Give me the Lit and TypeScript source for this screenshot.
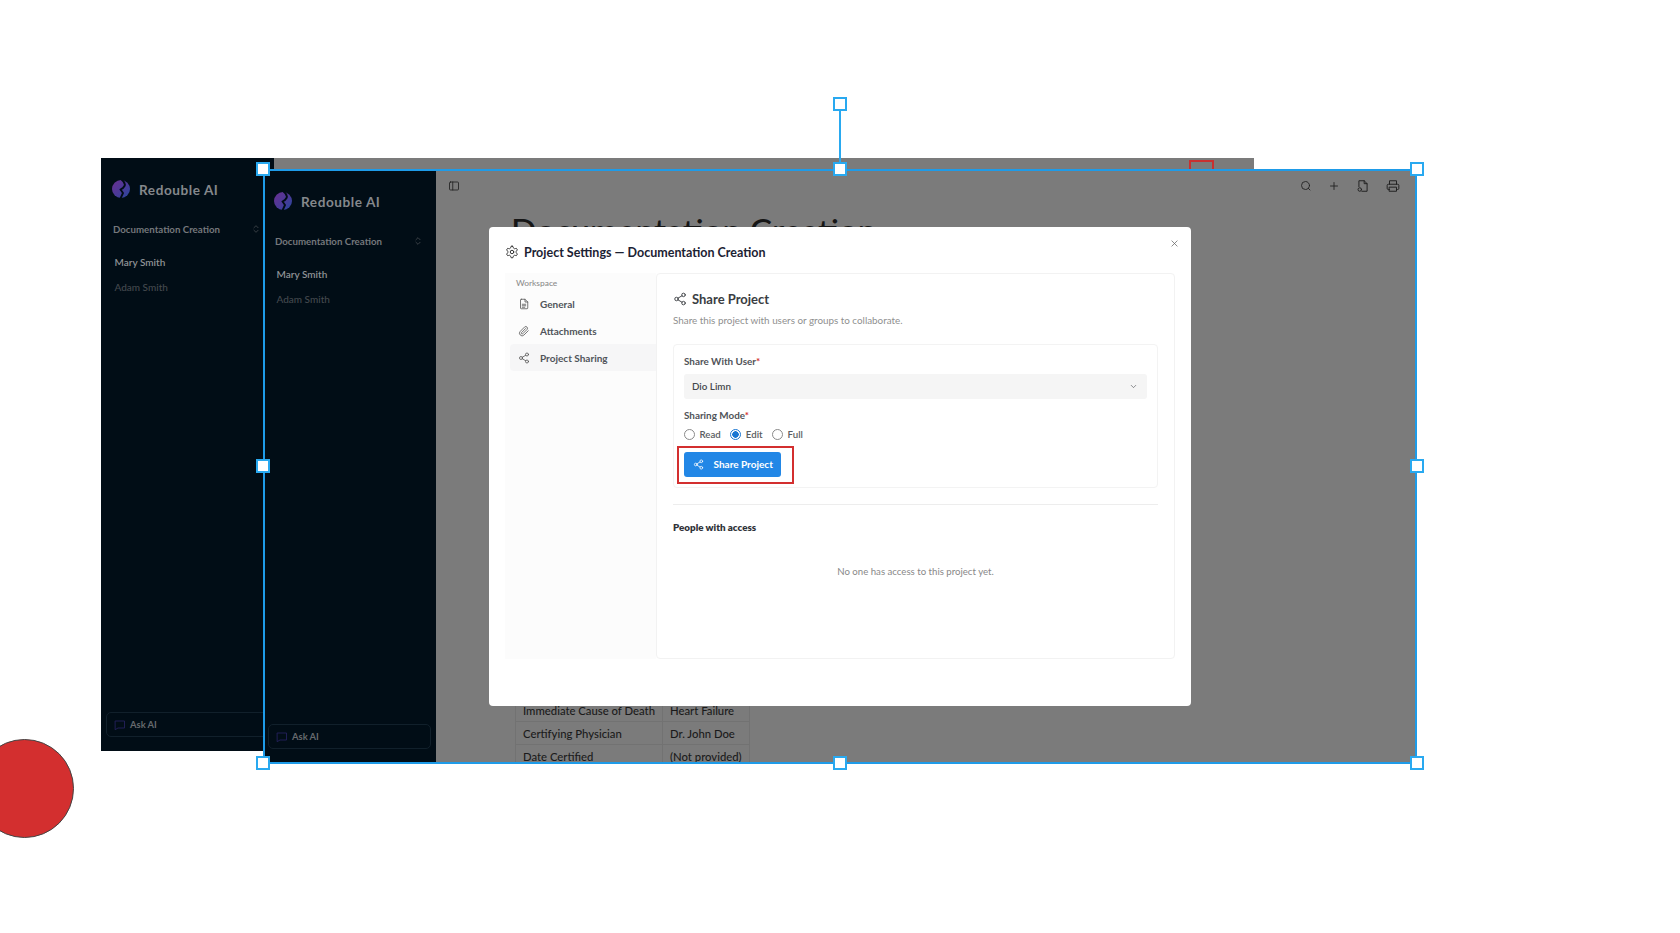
import { LitElement, html, css, svg } from "lit";
import { customElement } from "lit/decorators.js";

const ic = (body: unknown, size = 12, sw = 1.6) => html`<svg width=${size} height=${size} viewBox="0 0 24 24" fill="none" stroke="currentColor" stroke-width=${sw} stroke-linecap="round" stroke-linejoin="round">${body}</svg>`;
const share = svg`<circle cx="18" cy="5" r="3"/><circle cx="6" cy="12" r="3"/><circle cx="18" cy="19" r="3"/><path d="M8.6 13.5l6.8 4M15.4 6.5l-6.8 4"/>`;
const gear = svg`<path d="M12.22 2h-.44a2 2 0 0 0-2 2v.18a2 2 0 0 1-1 1.73l-.43.25a2 2 0 0 1-2 0l-.15-.08a2 2 0 0 0-2.73.73l-.22.38a2 2 0 0 0 .73 2.73l.15.1a2 2 0 0 1 1 1.72v.51a2 2 0 0 1-1 1.74l-.15.09a2 2 0 0 0-.73 2.73l.22.38a2 2 0 0 0 2.73.73l.15-.08a2 2 0 0 1 2 0l.43.25a2 2 0 0 1 1 1.73V20a2 2 0 0 0 2 2h.44a2 2 0 0 0 2-2v-.18a2 2 0 0 1 1-1.73l.43-.25a2 2 0 0 1 2 0l.15.08a2 2 0 0 0 2.73-.73l.22-.39a2 2 0 0 0-.73-2.73l-.15-.08a2 2 0 0 1-1-1.74v-.5a2 2 0 0 1 1-1.74l.15-.09a2 2 0 0 0 .73-2.73l-.22-.38a2 2 0 0 0-2.73-.73l-.15.08a2 2 0 0 1-2 0l-.43-.25a2 2 0 0 1-1-1.73V4a2 2 0 0 0-2-2z"/><circle cx="12" cy="12" r="3"/>`;
const doc = svg`<path d="M6.5 2.5h7.5l5.5 5.5v12a1.5 1.5 0 0 1-1.5 1.5H6.5A1.5 1.5 0 0 1 5 20V4a1.5 1.5 0 0 1 1.5-1.5z"/><path d="M14 2.5V8h5.5M8.5 12.5h7M8.5 15.5h7M8.5 18.5h5"/>`;
const clip = svg`<path d="M20.5 11.5l-8.6 8.6a5.2 5.2 0 0 1-7.4-7.4l8.9-8.9a3.5 3.5 0 0 1 4.9 4.9l-8.9 8.9a1.7 1.7 0 0 1-2.4-2.4l8.2-8.2"/>`;

@customElement("app-sidebar")
class AppSidebar extends LitElement {
  static styles = css`
    :host { display: flex; flex-direction: column; width: 173px; flex: none; background: #010d16; font-family: Lato, sans-serif; box-sizing: border-box; padding: 22px 5px 14px; }
    .brand { display: flex; align-items: center; gap: 9px; padding-left: 6px; height: 18px; }
    .brand b { font-size: 13.6px; font-weight: 700; letter-spacing: .55px; color: #85888c; position: relative; top: 1px; }
    .proj { display: flex; align-items: center; justify-content: space-between; margin-top: 24px; padding: 0 8px 0 7px; font-size: 9.7px; font-weight: 700; color: #75787c; height: 14px; }
    .proj svg { color: #55585c; }
    .user { margin-top: 19px; padding-left: 8.5px; font-size: 10px; line-height: 14px; font-weight: 600; color: #8f9295; }
    .user + .user { margin-top: 10.5px; font-weight: 500; color: #44494e; }
    .ask { margin-top: auto; display: flex; align-items: center; gap: 4px; height: 25px; padding-left: 7px; border: 1px solid #11202b; border-radius: 5px; font-size: 9.4px; font-weight: 700; color: #66696d; box-sizing: border-box; }
    .ask svg { color: #24205c; }
  `;
  render() {
    return html`
      <div class="brand">
        <svg width="18" height="18" viewBox="0 0 18 18">
          <defs><linearGradient id="lg" x1="0" y1="0" x2="1" y2="1"><stop offset="0" stop-color="#6a2f90"/><stop offset=".55" stop-color="#4a3a98"/><stop offset="1" stop-color="#24489c"/></linearGradient></defs>
          <circle cx="9" cy="9" r="9" fill="url(#lg)"/>
          <path d="M9.5 -.5 Q14 3 12.5 6 Q11.5 8 8.5 9.5 L11 13 L8.5 18.5" fill="none" stroke="#010d16" stroke-width="1.9" stroke-linejoin="round"/>
        </svg>
        <b>Redouble AI</b>
      </div>
      <div class="proj"><span>Documentation Creation</span>${ic(svg`<path d="M7 9l5-5 5 5M7 15l5 5 5-5"/>`, 10, 1.6)}</div>
      <div class="user">Mary Smith</div>
      <div class="user">Adam Smith</div>
      <div class="ask">${ic(svg`<path d="M3 4h18v14H8l-5 3z"/>`, 12, 1.8)}<span>Ask AI</span></div>
    `;
  }
}

@customElement("app-doc")
class AppDoc extends LitElement {
  static styles = css`
    :host { display: flex; flex-direction: column; flex: 1; min-width: 0; overflow: hidden; background: #7b7b7b; font-family: Lato, sans-serif; color: #111; }
    .bar { display: flex; align-items: center; justify-content: space-between; flex: none; height: 32px; padding: 0 17px 0 12px; color: #222; }
    .tools { display: flex; align-items: center; gap: 16px; }
    h1 { margin: 8px 0 0 75px; font-size: 33.5px; font-weight: 500; line-height: 40px; color: #161616; white-space: nowrap; }
    .fill { flex: 1; }
    table { align-self: flex-start; border-collapse: collapse; margin: 0 0 -5px 79px; font-size: 11.3px; flex: none; color: #1a1a1a; font-weight: 500; }
    td { border: 1px solid #727272; height: 23px; padding: 0 7px; white-space: nowrap; box-sizing: border-box; }
    td:first-child { min-width: 147px; }
    td:last-child { min-width: 84px; }
  `;
  render() {
    return html`
      <div class="bar">
        ${ic(svg`<rect x="3" y="4" width="18" height="16" rx="2"/><path d="M9.5 4v16"/>`, 12, 1.7)}
        <div class="tools">
          ${ic(svg`<circle cx="11" cy="11" r="8"/><path d="M20 20l-3.5-3.5"/>`, 12, 1.8)}
          ${ic(svg`<path d="M12 5v14M5 12h14"/>`, 12, 1.8)}
          ${ic(svg`<path d="M5 13V3h9l5 5v13H10"/><path d="M14 3v5h5"/><circle cx="6.5" cy="18" r="3"/>`, 14, 1.7)}
          ${ic(svg`<path d="M6 9V3h12v6M6 18H4a2 2 0 0 1-2-2v-5a2 2 0 0 1 2-2h16a2 2 0 0 1 2 2v5a2 2 0 0 1-2 2h-2"/><path d="M6 14h12v7H6z"/>`, 14, 1.7)}
        </div>
      </div>
      <h1>Documentation Creation</h1>
      <div class="fill"></div>
      <table>
        <tr><td>Immediate Cause of Death</td><td>Heart Failure</td></tr>
        <tr><td>Certifying Physician</td><td>Dr. John Doe</td></tr>
        <tr><td>Date Certified</td><td>(Not provided)</td></tr>
      </table>
    `;
  }
}

@customElement("app-modal")
class AppModal extends LitElement {
  static styles = css`
    :host { display: flex; flex-direction: column; width: 702px; height: 479px; box-sizing: border-box; padding: 0 16px 47px 16px; background: #fff; border-radius: 4px; font-family: Lato, sans-serif; color: #4a4a4a; position: relative; }
    .head { display: flex; align-items: center; gap: 5px; height: 50px; margin-bottom: -4px; flex: none; font-size: 12.5px; font-weight: 700; color: #1c2233; }
    .head svg { color: #333; }
    .x { position: absolute; right: 12px; top: 12px; display: flex; color: #666; }
    .body { display: flex; flex: 1; min-height: 0; }
    .nav { width: 151px; flex: none; background: #fcfcfc; padding: 4px 0 0 5px; box-sizing: border-box; }
    .cap { font-size: 8.4px; font-weight: 500; color: #8d8d8d; padding-left: 6px; line-height: 12px; }
    .cap + .item { margin-top: 1px; }
    .item { display: flex; align-items: center; gap: 10px; height: 27px; padding-left: 8px; font-size: 10px; font-weight: 700; color: #50545a; border-radius: 4px 0 0 4px; }
    .item.on { background: #f6f6f7; }
    .item svg { color: #555; flex: none; }
    .main { flex: 1; min-width: 0; border: 1px solid #f2f2f2; border-radius: 4px; padding: 16px 16px 0 16px; box-sizing: border-box; background: #fff; }
    h2 { display: flex; align-items: center; gap: 5px; margin: 0; font-size: 13px; font-weight: 700; color: #3a3d42; height: 18px; }
    .desc { margin-top: 5px; font-size: 9.85px; line-height: 14px; color: #8f8f8f; }
    .form { margin-top: 17px; border: 1px solid #f3f3f3; border-radius: 4px; padding: 9px 10px 10px; height: 144px; box-sizing: border-box; }
    .lbl { font-size: 9.9px; font-weight: 700; color: #505358; line-height: 14px; }
    .lbl i { color: #d32f2f; font-style: normal; }
    .sel { display: flex; align-items: center; justify-content: space-between; margin: 6px 0 9px; height: 25px; padding: 0 9px 0 8px; background: #f5f5f5; border-radius: 3px; font-size: 9.8px; font-weight: 600; color: #44474c; line-height: 22px; }
    .sel span { margin-top: -1px; }
    .radios { display: flex; align-items: center; margin-top: 5px; height: 14px; font-size: 9.7px; font-weight: 600; color: #5a5d62; }
    .r { width: 9px; height: 9px; border: 1px solid #8a8a8a; border-radius: 50%; margin-right: 4.5px; flex: none; background: #fff; }
    .r.on { border-color: #1976d2; background: radial-gradient(circle, #1976d2 0 3px, #fff 3.5px); }
    .radios span + .r { margin-left: 9.5px; }
    .hl { width: 117px; height: 38px; margin: 5px 0 0 -7px; border: 2.5px solid #d32f2f; box-sizing: border-box; display: flex; align-items: center; padding: 0 0 2px 4.5px; }
    .btn { display: flex; align-items: center; width: 97px; height: 25px; box-sizing: border-box; padding-left: 9px; gap: 10px; background: #2287e6; border-radius: 3px; color: #fff; font-size: 10px; font-weight: 700; }
    hr { border: 0; border-top: 1px solid #ededed; margin: 16px 0 0; }
    .ppl { margin-top: 15px; font-size: 9.8px; font-weight: 800; color: #2f3238; line-height: 14px; }
    .none { margin-top: 30px; text-align: center; font-size: 9.65px; color: #888; line-height: 14px; }
  `;
  render() {
    return html`
      <div class="head">${ic(gear, 14, 1.7)}<span>Project Settings — Documentation Creation</span></div>
      <div class="x">${ic(svg`<path d="M5 5l14 14M19 5L5 19"/>`, 9, 2)}</div>
      <div class="body">
        <div class="nav">
          <div class="cap">Workspace</div>
          <div class="item">${ic(doc, 12, 1.6)}<span>General</span></div>
          <div class="item">${ic(clip, 12, 1.6)}<span>Attachments</span></div>
          <div class="item on">${ic(share, 12, 1.6)}<span>Project Sharing</span></div>
        </div>
        <div class="main">
          <h2>${ic(share, 14, 1.6)}<span>Share Project</span></h2>
          <div class="desc">Share this project with users or groups to collaborate.</div>
          <div class="form">
            <div class="lbl">Share With User<i>*</i></div>
            <div class="sel"><span>Dio Limn</span>${ic(svg`<path d="M6 9l6 6 6-6"/>`, 9, 1.6)}</div>
            <div class="lbl">Sharing Mode<i>*</i></div>
            <div class="radios"><div class="r"></div><span>Read</span><div class="r on"></div><span>Edit</span><div class="r"></div><span>Full</span></div>
            <div class="hl"><div class="btn">${ic(share, 11, 1.7)}<span>Share Project</span></div></div>
          </div>
          <hr />
          <div class="ppl">People with access</div>
          <div class="none">No one has access to this project yet.</div>
        </div>
      </div>
    `;
  }
}

@customElement("app-root")
class AppRoot extends LitElement {
  static styles = css`
    :host { display: block; position: relative; width: 1680px; height: 933px; overflow: hidden; background: #fff; }
    .screen { position: absolute; display: flex; width: 1153px; height: 593px; overflow: hidden; }
    .back { left: 101px; top: 158px; }
    .front { left: 263px; top: 170px; width: 1154px; }
    .pane { flex: 1; background: #7b7b7b; }
    .mark { position: absolute; left: 1189px; top: 160px; width: 25px; height: 14px; border: 2.5px solid #c93030; box-sizing: border-box; }
    .dot { position: absolute; left: -25px; top: 739px; width: 99px; height: 99px; border-radius: 50%; background: #d32f2f; border: 1.5px solid #444; box-sizing: border-box; }
    .sel { position: absolute; left: 263px; top: 169px; width: 1154px; height: 595px; border: 2px solid #1e9be8; box-sizing: border-box; }
    .stem { position: absolute; left: 839px; top: 104px; width: 2px; height: 65px; background: #29a9f0; }
    .h { position: absolute; width: 14px; height: 14px; background: #fff; border: 2px solid #29a9f0; box-sizing: border-box; transform: translate(-7px, -7px); }
    .modal-wrap { position: absolute; left: 226px; top: 57px; }
  `;
  render() {
    const hs = [[263,169],[840,169],[1417,169],[263,466],[1417,466],[263,763],[840,763],[1417,763],[840,104]];
    return html`
      <div class="screen back"><app-sidebar></app-sidebar><div class="pane"></div></div>
      <div class="mark"></div>
      <div class="screen front">
        <app-sidebar></app-sidebar>
        <app-doc></app-doc>
        <div class="modal-wrap"><app-modal></app-modal></div>
      </div>
      <div class="dot"></div>
      <div class="sel"></div>
      <div class="stem"></div>
      ${hs.map(([x, y]) => html`<div class="h" style="left:${x}px;top:${y}px"></div>`)}
    `;
  }
}
